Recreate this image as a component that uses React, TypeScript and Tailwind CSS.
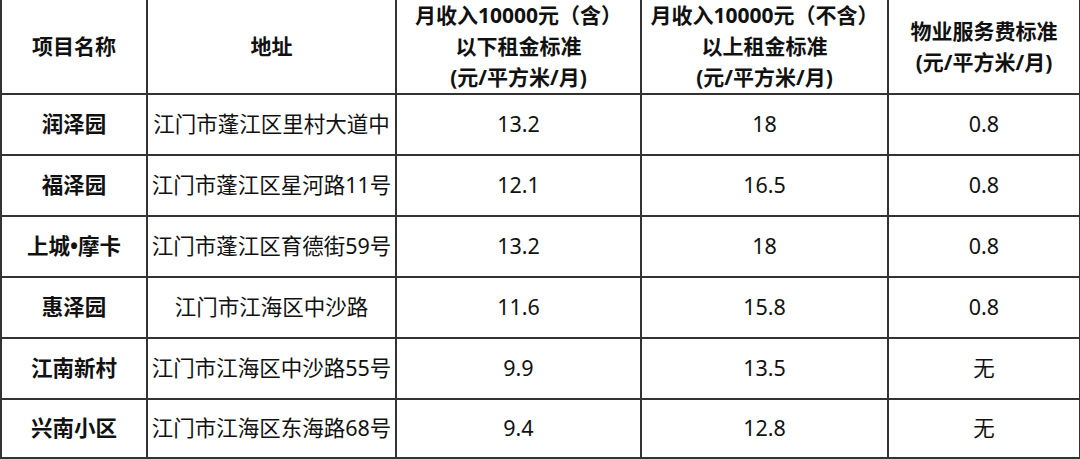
import React from 'react';

type Row = {
  name: string;
  address: string;
  low: string;
  high: string;
  fee: string;
};

const rows: Row[] = [
  { name: '润泽园', address: '江门市蓬江区里村大道中', low: '13.2', high: '18', fee: '0.8' },
  { name: '福泽园', address: '江门市蓬江区星河路11号', low: '12.1', high: '16.5', fee: '0.8' },
  { name: '上城•摩卡', address: '江门市蓬江区育德街59号', low: '13.2', high: '18', fee: '0.8' },
  { name: '惠泽园', address: '江门市江海区中沙路', low: '11.6', high: '15.8', fee: '0.8' },
  { name: '江南新村', address: '江门市江海区中沙路55号', low: '9.9', high: '13.5', fee: '无' },
  { name: '兴南小区', address: '江门市江海区东海路68号', low: '9.4', high: '12.8', fee: '无' },
];

const cell = 'border-2 border-[#333] text-center align-middle p-0';
const head = `${cell} border-t-0 whitespace-nowrap`;

const App: React.FC = () => {
  return (
    <div
      className="w-[1080px] h-[459px] bg-white overflow-hidden"
      style={{ fontFamily: '"Noto Sans", "Noto Sans CJK SC", sans-serif' }}
    >
      <table className="table-fixed border-collapse w-[1079px] text-[21px] text-[#111]">
        <colgroup>
          <col className="w-[146px]" />
          <col className="w-[249px]" />
          <col className="w-[245px]" />
          <col className="w-[247px]" />
          <col className="w-[192px]" />
        </colgroup>
        <thead>
          <tr className="h-[93px] font-bold leading-[31px]">
            <th className={head}>项目名称</th>
            <th className={head}>地址</th>
            <th className={head}>
              月收入10000元（含）
              <br />
              以下租金标准
              <br />
              (元/平方米/月)
            </th>
            <th className={head}>
              月收入10000元（不含）
              <br />
              以上租金标准
              <br />
              (元/平方米/月)
            </th>
            <th className={head}>
              物业服务费标准
              <br />
              (元/平方米/月)
            </th>
          </tr>
        </thead>
        <tbody className="text-[21.5px]">
          {rows.map((r, i) => (
            <tr key={r.name} className={i === rows.length - 1 ? 'h-[59px]' : 'h-[61px]'}>
              <td className={`${cell} font-bold`}>{r.name}</td>
              <td className={`${cell} whitespace-nowrap`}>{r.address}</td>
              <td className={cell}>{r.low}</td>
              <td className={cell}>{r.high}</td>
              <td className={cell}>{r.fee}</td>
            </tr>
          ))}
        </tbody>
      </table>
    </div>
  );
};

export default App;
